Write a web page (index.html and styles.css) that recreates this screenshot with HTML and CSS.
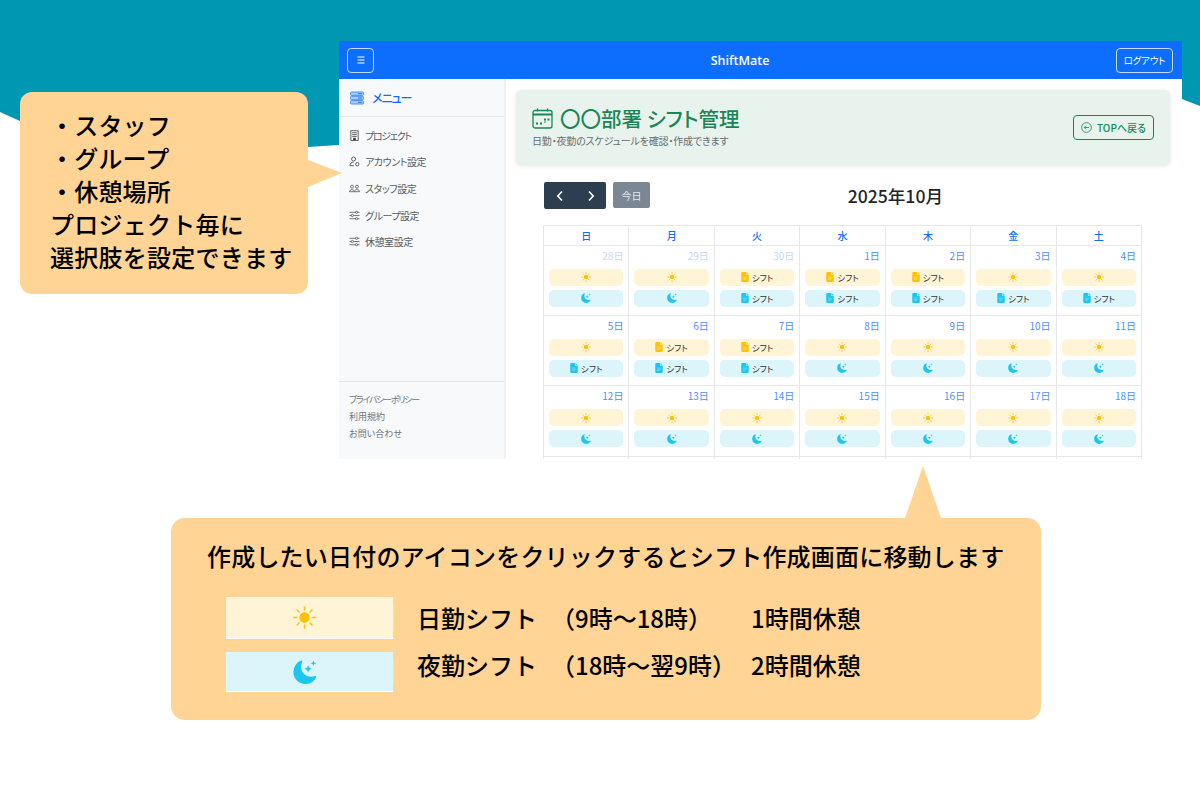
FILE: index.html
```html
<!DOCTYPE html>
<html lang="ja">
<head>
<meta charset="utf-8">
<title>ShiftMate</title>
<link rel="stylesheet" href="styles.css">
</head>
<body>
<svg class="defs" width="0" height="0" aria-hidden="true">
  <symbol id="sun" viewBox="0 0 16 16">
    <circle cx="8" cy="8" r="3.6" fill="#ffc107"/>
    <g stroke="#ffc107" stroke-width="1" stroke-linecap="round">
      <path d="M8 .6v2M8 13.4v2M.6 8h2M13.4 8h2M2.800 2.800l1.400 1.400M11.800 11.800l1.400 1.400M2.800 13.200l1.400-1.400M11.800 4.200l1.400-1.400"/>
    </g>
  </symbol>
  <symbol id="moon" viewBox="0 0 16 16">
    <path fill="#1cc6ef" d="M6 .6a.6.6 0 0 1 .1.7A6.6 6.6 0 0 0 5.300 4.500c0 3.700 3 6.700 6.700 6.700.9 0 1.800-.2 2.600-.5a.6.6 0 0 1 .8.800A7.700 7.700 0 0 1 8.200 16 7.900 7.900 0 0 1 .3 8.100 7.900 7.900 0 0 1 5.400.4.600.600 0 0 1 6 .6z"/>
    <path fill="#1cc6ef" d="M10.100 3.400l.7 1.800 1.800.7-1.800.7-.7 1.800-.7-1.800-1.800-.7 1.800-.7zM13.600.2l.5 1.400 1.400.5-1.400.5-.5 1.400-.5-1.400-1.400-.5 1.400-.5z"/>
  </symbol>
  <symbol id="doc" viewBox="0 0 12 16">
    <path d="M2 0h5.500v3a1.500 1.500 0 0 0 1.500 1.500h3V14a2 2 0 0 1-2 2H2a2 2 0 0 1-2-2V2a2 2 0 0 1 2-2z"/>
    <path d="M8.500 0 12 3.500H9a.5.500 0 0 1-.5-.5z"/>
    <path d="M3 8h6M3 10h6M3 12h4" stroke="#fff" stroke-opacity=".45" stroke-width="1"/>
  </symbol>
</svg>

<main class="slide">
  <svg class="wave" viewBox="0 0 1200 150" width="1200" height="150" aria-hidden="true">
    <path d="M0 0H1200V106L1182 99 760 132 339 145 308 147 120 146C80 140 50 134 20 121L0 112Z"/>
  </svg>

  <section class="app">
    <header class="topbar">
      <button class="tb-btn tb-menu" type="button" aria-label="menu">
        <svg width="10" height="10" viewBox="0 0 10 10"><path d="M1.500 2h7M1.500 5h7M1.500 8h7" stroke="#fff" stroke-width="1"/></svg>
      </button>
      <span class="brand">ShiftMate</span>
      <button class="tb-btn tb-logout" type="button">ログアウト</button>
    </header>
    <div class="app-body">
      <aside class="sidebar">
        <div class="side-head">
          <svg width="14" height="14" viewBox="0 0 14 14" aria-hidden="true">
            <rect x=".5" y="1" width="13" height="3.400" rx="1" fill="#a9cbff" stroke="#3d8bfd" stroke-width=".9"/>
            <rect x=".5" y="5.300" width="13" height="3.400" rx="1" fill="#a9cbff" stroke="#3d8bfd" stroke-width=".9"/>
            <rect x=".5" y="9.600" width="13" height="3.400" rx="1" fill="#a9cbff" stroke="#3d8bfd" stroke-width=".9"/>
            <path d="M8 2.700h4M8 7h4M8 11.300h4" stroke="#0d6efd" stroke-width=".9"/>
          </svg>
          <span class="side-title">メニュー</span>
        </div>
        <nav class="side-nav">
          <a class="side-link">
            <svg viewBox="0 0 12 12" width="11" height="11" aria-hidden="true"><path d="M2 .8h8v10.600H2zM3.500 3h5M3.500 5h5M3.500 7h5" fill="none" stroke="#444" stroke-width=".9"/><rect x="4.500" y="8.500" width="3" height="3" fill="#444"/></svg>
            <span class="tight">プロジェクト</span></a>
          <a class="side-link">
            <svg viewBox="0 0 12 12" width="11" height="11" aria-hidden="true"><circle cx="5" cy="3.300" r="2.200" fill="none" stroke="#444" stroke-width=".9"/><path d="M1 10.500c0-2.500 1.700-3.700 4-3.700" fill="none" stroke="#444" stroke-width=".9"/><path d="M1 10.600h4.500" stroke="#444" stroke-width=".9"/><circle cx="9" cy="9" r="1.800" fill="none" stroke="#444" stroke-width=".9"/></svg>
            <span>アカウント設定</span></a>
          <a class="side-link">
            <svg viewBox="0 0 12 12" width="11" height="11" aria-hidden="true"><g fill="none" stroke="#444" stroke-width=".8"><circle cx="3.300" cy="4" r="1.600"/><circle cx="8.700" cy="4" r="1.600"/><path d="M.5 9.500c0-3 5.500-3 5.500 0zM6 9.500h5.500c0-2.600-3.600-3-5-1.500"/></g></svg>
            <span>スタッフ設定</span></a>
          <a class="side-link">
            <svg viewBox="0 0 12 12" width="11" height="11" aria-hidden="true"><g fill="none" stroke="#444" stroke-width=".8"><path d="M.5 2.500h6.500M9.500 2.500h2M.5 6h2M5 6h6.500M.5 9.500h6.500M9.500 9.500h2"/><circle cx="8.200" cy="2.500" r="1.200"/><circle cx="3.700" cy="6" r="1.200"/><circle cx="8.200" cy="9.500" r="1.200"/></g></svg>
            <span>グループ設定</span></a>
          <a class="side-link">
            <svg viewBox="0 0 12 12" width="11" height="11" aria-hidden="true"><g fill="none" stroke="#444" stroke-width=".8"><path d="M.5 2.500h6.500M9.500 2.500h2M.5 6h2M5 6h6.500M.5 9.500h6.500M9.500 9.500h2"/><circle cx="8.200" cy="2.500" r="1.200"/><circle cx="3.700" cy="6" r="1.200"/><circle cx="8.200" cy="9.500" r="1.200"/></g></svg>
            <span>休憩室設定</span></a>
        </nav>
        <footer class="side-foot">
          <a class="tight">プライバシーポリシー</a>
          <a>利用規約</a>
          <a>お問い合わせ</a>
        </footer>
      </aside>

      <div class="content">
        <div class="hero">
          <div class="hero-text">
            <h1 class="hero-title">
              <svg width="21" height="21" viewBox="0 0 21 21" aria-hidden="true"><g fill="none" stroke="#198754" stroke-width="1.300"><rect x="1" y="2.500" width="19" height="17.500" rx="2"/><path d="M5.500.5v3M15.500.5v3"/></g><rect x="1" y="5.500" width="19" height="2" fill="#198754"/><path d="M12 10.500h2v2h-2zM15.500 10.500h2v2h-2zM4 14.500h2v2H4zM8 14.500h2v2H8zM12 13.500h2v1h-2z" fill="#198754"/></svg>
              <span>〇〇部署 シフト管理</span>
            </h1>
            <p class="hero-sub">日勤・夜勤のスケジュールを確認・作成できます</p>
          </div>
          <button class="back-btn" type="button">
            <svg width="11" height="11" viewBox="0 0 12 12" aria-hidden="true"><circle cx="6" cy="6" r="5.300" fill="none" stroke="#198754" stroke-width=".9"/><path d="M8.800 6H3.500M5.500 4 3.500 6l2 2" fill="none" stroke="#198754" stroke-width=".9"/></svg>
            TOPへ戻る
          </button>
        </div>

        <div class="cal">
          <div class="cal-bar">
            <div class="cal-tools">
              <div class="nav-group">
                <button type="button" aria-label="prev"><svg width="10" height="12" viewBox="0 0 10 12"><path d="M7 1.500 2.800 6 7 10.500" fill="none" stroke="#fff" stroke-width="1.600"/></svg></button>
                <button type="button" aria-label="next"><svg width="10" height="12" viewBox="0 0 10 12"><path d="M3 1.500 7.200 6 3 10.500" fill="none" stroke="#fff" stroke-width="1.600"/></svg></button>
              </div>
              <button class="today" type="button">今日</button>
            </div>
            <h2 class="cal-title">2025年10月</h2>
          </div>

          <div class="cal-grid">
            <div class="dow">日</div><div class="dow">月</div><div class="dow">火</div><div class="dow">水</div><div class="dow">木</div><div class="dow">金</div><div class="dow">土</div>

            <div class="day muted"><span class="num">28日</span><a class="pill day-p"><svg class="ic"><use href="#sun"/></svg></a><a class="pill night-p"><svg class="ic"><use href="#moon"/></svg></a></div>
            <div class="day muted"><span class="num">29日</span><a class="pill day-p"><svg class="ic"><use href="#sun"/></svg></a><a class="pill night-p"><svg class="ic"><use href="#moon"/></svg></a></div>
            <div class="day muted"><span class="num">30日</span><a class="pill day-p"><svg class="doc"><use href="#doc"/></svg>シフト</a><a class="pill night-p"><svg class="doc"><use href="#doc"/></svg>シフト</a></div>
            <div class="day"><span class="num">1日</span><a class="pill day-p"><svg class="doc"><use href="#doc"/></svg>シフト</a><a class="pill night-p"><svg class="doc"><use href="#doc"/></svg>シフト</a></div>
            <div class="day"><span class="num">2日</span><a class="pill day-p"><svg class="doc"><use href="#doc"/></svg>シフト</a><a class="pill night-p"><svg class="doc"><use href="#doc"/></svg>シフト</a></div>
            <div class="day"><span class="num">3日</span><a class="pill day-p"><svg class="ic"><use href="#sun"/></svg></a><a class="pill night-p"><svg class="doc"><use href="#doc"/></svg>シフト</a></div>
            <div class="day"><span class="num">4日</span><a class="pill day-p"><svg class="ic"><use href="#sun"/></svg></a><a class="pill night-p"><svg class="doc"><use href="#doc"/></svg>シフト</a></div>

            <div class="day"><span class="num">5日</span><a class="pill day-p"><svg class="ic"><use href="#sun"/></svg></a><a class="pill night-p"><svg class="doc"><use href="#doc"/></svg>シフト</a></div>
            <div class="day"><span class="num">6日</span><a class="pill day-p"><svg class="doc"><use href="#doc"/></svg>シフト</a><a class="pill night-p"><svg class="doc"><use href="#doc"/></svg>シフト</a></div>
            <div class="day"><span class="num">7日</span><a class="pill day-p"><svg class="doc"><use href="#doc"/></svg>シフト</a><a class="pill night-p"><svg class="doc"><use href="#doc"/></svg>シフト</a></div>
            <div class="day"><span class="num">8日</span><a class="pill day-p"><svg class="ic"><use href="#sun"/></svg></a><a class="pill night-p"><svg class="ic"><use href="#moon"/></svg></a></div>
            <div class="day"><span class="num">9日</span><a class="pill day-p"><svg class="ic"><use href="#sun"/></svg></a><a class="pill night-p"><svg class="ic"><use href="#moon"/></svg></a></div>
            <div class="day"><span class="num">10日</span><a class="pill day-p"><svg class="ic"><use href="#sun"/></svg></a><a class="pill night-p"><svg class="ic"><use href="#moon"/></svg></a></div>
            <div class="day"><span class="num">11日</span><a class="pill day-p"><svg class="ic"><use href="#sun"/></svg></a><a class="pill night-p"><svg class="ic"><use href="#moon"/></svg></a></div>

            <div class="day"><span class="num">12日</span><a class="pill day-p"><svg class="ic"><use href="#sun"/></svg></a><a class="pill night-p"><svg class="ic"><use href="#moon"/></svg></a></div>
            <div class="day"><span class="num">13日</span><a class="pill day-p"><svg class="ic"><use href="#sun"/></svg></a><a class="pill night-p"><svg class="ic"><use href="#moon"/></svg></a></div>
            <div class="day"><span class="num">14日</span><a class="pill day-p"><svg class="ic"><use href="#sun"/></svg></a><a class="pill night-p"><svg class="ic"><use href="#moon"/></svg></a></div>
            <div class="day"><span class="num">15日</span><a class="pill day-p"><svg class="ic"><use href="#sun"/></svg></a><a class="pill night-p"><svg class="ic"><use href="#moon"/></svg></a></div>
            <div class="day"><span class="num">16日</span><a class="pill day-p"><svg class="ic"><use href="#sun"/></svg></a><a class="pill night-p"><svg class="ic"><use href="#moon"/></svg></a></div>
            <div class="day"><span class="num">17日</span><a class="pill day-p"><svg class="ic"><use href="#sun"/></svg></a><a class="pill night-p"><svg class="ic"><use href="#moon"/></svg></a></div>
            <div class="day"><span class="num">18日</span><a class="pill day-p"><svg class="ic"><use href="#sun"/></svg></a><a class="pill night-p"><svg class="ic"><use href="#moon"/></svg></a></div>

            <div class="day"></div><div class="day"></div><div class="day"></div><div class="day"></div><div class="day"></div><div class="day"></div><div class="day"></div>
          </div>
        </div>
      </div>
    </div>
  </section>

  <aside class="note note-left">
    <p class="bullet">・スタッフ</p>
    <p class="bullet">・グループ</p>
    <p class="bullet">・休憩場所</p>
    <p>プロジェクト毎に</p>
    <p>選択肢を設定できます</p>
  </aside>

  <aside class="note note-bottom">
    <p class="note-lead">作成したい日付のアイコンをクリックするとシフト作成画面に移動します</p>
    <div class="legend">
      <div class="swatch swatch-day"><svg width="23" height="23" aria-hidden="true"><use href="#sun"/></svg></div>
      <span>日勤シフト</span><span>（9時〜18時）</span><span>1時間休憩</span>
      <div class="swatch swatch-night"><svg width="24" height="24" aria-hidden="true"><use href="#moon"/></svg></div>
      <span class="row2">夜勤シフト</span><span class="row2">（18時〜翌9時）</span><span class="row2">2時間休憩</span>
    </div>
  </aside>
</main>
</body>
</html>
```
FILE: styles.css
```css
* { box-sizing: border-box; }
html, body { margin: 0; padding: 0; }
body {
  background: #fff;
  font-family: "Noto Sans CJK JP", "Noto Sans", sans-serif;
  color: #212529;
  overflow: hidden;
}
p, h1, h2 { margin: 0; font-weight: inherit; }
button { font-family: inherit; padding: 0; }
.defs { position: absolute; }

.slide { position: relative; width: 1200px; height: 800px; overflow: hidden; }
.wave { position: absolute; left: 0; top: 0; display: block; }
.wave path { fill: #0097b2; }

/* app screenshot, a window on the free canvas */
.app {
  position: absolute; left: 339px; top: 41px;
  width: 843px; height: 418px;
  background: #fff;
  overflow: hidden;
  display: flex; flex-direction: column;
  font-feature-settings: "palt";
}
.topbar {
  flex: 0 0 38px;
  background: #0d6efd;
  display: flex; align-items: center; justify-content: space-between;
  padding: 0 9px 0 8px;
}
.tb-btn {
  height: 25px; background: transparent; color: #fff;
  border: 1px solid rgba(255,255,255,.75); border-radius: 4px;
  display: flex; align-items: center; justify-content: center;
}
.tb-menu { width: 27px; }
.tb-logout { width: 57px; font-size: 9.500px; letter-spacing: -.2px; font-feature-settings: "palt"; }
.brand { color: #fff; font-size: 12.500px; margin-right: 10px; font-family: "Open Sans", sans-serif; font-weight: 600; }

.app-body { flex: 1; display: flex; min-height: 0; }
.sidebar {
  flex: 0 0 167px;
  background: #f8f9fa;
  border-right: 2px solid #eff1f3;
  display: flex; flex-direction: column;
}
.side-head {
  height: 38px; flex: none;
  display: flex; align-items: center; gap: 8px;
  padding: 0 11px;
  border-bottom: 1px solid #e6e8ea;
  color: #0d6efd; font-size: 12px; font-weight: 500;
}
.side-title { letter-spacing: -1px; }
.side-nav { display: flex; flex-direction: column; padding-top: 5px; }
.side-link {
  height: 26.600px;
  display: flex; align-items: center; gap: 5px;
  padding-left: 10px;
  font-size: 10px; color: #555b61; white-space: nowrap; letter-spacing: -.45px;
}
.tight { letter-spacing: -1.300px; }
.side-foot {
  margin-top: auto;
  height: 78px;
  border-top: 1px solid #e2e4e6;
  padding: 9px 10px 0;
  display: flex; flex-direction: column;
  font-size: 9px; color: #6c757d; line-height: 17px;
}

.content { flex: 1; min-width: 0; padding: 11px 12px 0 10px; }
.hero {
  height: 75px;
  background: #e9f3ee;
  border-radius: 5px;
  box-shadow: 0 1px 4px rgba(0,0,0,.1);
  display: flex; align-items: center; justify-content: space-between;
  padding: 0 16px;
}
.hero-title {
  display: flex; align-items: center; gap: 7px;
  color: #198754; font-size: 20.500px; font-weight: 500; line-height: 26px;
  white-space: nowrap;
  margin-top: -2px;
}
.hero-sub { font-size: 10px; color: #666d73; line-height: 14px; margin-top: 3px; letter-spacing: -.17px; }
.back-btn {
  width: 81px; height: 25px;
  background: transparent; color: #198754;
  border: 1px solid #198754; border-radius: 4px;
  display: flex; align-items: center; justify-content: center; gap: 5px;
  font-size: 10px; font-weight: 500; font-feature-settings: "palt"; white-space: nowrap;
}

.cal { padding: 17px 28px 0; }
.cal-bar { position: relative; height: 43px; display: flex; justify-content: space-between; }
.cal-tools { display: flex; gap: 7px; align-items: flex-start; }
.nav-group { display: flex; width: 62px; height: 27px; background: #2c3e50; border-radius: 2px; }
.nav-group button { flex: 1; background: none; border: 0; display: flex; align-items: center; justify-content: center; }
.today { width: 37px; height: 26px; background: #7b8794; color: #e4e7ea; border: 0; border-radius: 2px; font-size: 10px; }
.cal-title { font-size: 17.600px; font-weight: 500; line-height: 28px; margin: 0 199px 0 0; white-space: nowrap; font-feature-settings: normal; }

.cal-grid {
  display: grid;
  grid-template-columns: repeat(7, 1fr);
  grid-auto-rows: 70.400px;
  grid-template-rows: 19.500px;
  width: 599px;
  margin-left: -1px;
  border-top: 1px solid #e6e8ea;
  border-left: 1px solid #e6e8ea;
}
.dow, .day { border-right: 1px solid #e6e8ea; border-bottom: 1px solid #e6e8ea; }
.dow { display: flex; align-items: center; justify-content: center; color: #0d6efd; font-size: 10px; font-weight: 500; }
.day { display: flex; flex-direction: column; padding: 3px 5px 0; }
.num { text-align: right; font-size: 10px; line-height: 14px; color: #4d8ffd; height: 20px; }
.muted .num { color: #c4d9fb; }
.pill {
  height: 17px; flex: none; border-radius: 5px; margin-bottom: 4px;
  display: flex; align-items: center; justify-content: center; gap: 3px;
  font-size: 8.500px; color: #333; font-feature-settings: "palt";
}
.day-p { background: #fff4d6; }
.night-p { background: #dcf5fb; }
.ic { width: 10px; height: 10px; }
.doc { width: 8px; height: 10px; }
.day-p .doc { fill: #ffc107; }
.night-p .doc { fill: #1cc6ef; }

/* callouts */
.note {
  position: absolute;
  background: #ffd495;
  color: #000;
  font-weight: 500;
  font-size: 24px;
}
.note::after { content: ""; position: absolute; background: #ffd495; }
.note-left {
  left: 20px; top: 92px; width: 288px; height: 202px;
  border-radius: 12px;
  padding: 16px 0 0 30px;
  line-height: 33px;
  white-space: nowrap;
  letter-spacing: .25px;
}
.note-left .bullet { letter-spacing: .2px; }
.note-left::after {
  left: 288px; top: 68px; width: 34px; height: 27px;
  clip-path: polygon(0 0, 100% 48%, 0 100%);
}
.note-bottom {
  left: 171px; top: 518px; width: 870px; height: 202px;
  border-radius: 14px;
  padding: 21px 37px 0 36px;
}
.note-bottom::after {
  left: 734px; top: -52px; width: 36px; height: 52px;
  clip-path: polygon(50% 0, 100% 100%, 0 100%);
}
.note-lead { font-size: 24px; line-height: 34px; white-space: nowrap; text-align: center; letter-spacing: .2px; }
.legend {
  margin: 24px 0 0 19px;
  display: grid;
  grid-template-columns: 176px 149px 200px auto;
  grid-template-rows: 42px 40px;
  row-gap: 13px;
  align-items: center;
  white-space: nowrap;
  line-height: 34px;
}
.legend > span:nth-child(4n+2) { padding-left: 15px; }
.row2 { margin-bottom: 14px; }
.swatch {
  width: 167px; height: 100%;
  display: flex; align-items: center; justify-content: center;
  padding-right: 10px;
  border-bottom: 1px solid #fff;
  box-shadow: 9px 0 0 -8px #ffdcaa;
}
.swatch-day { background: #fff4d6; }
.swatch-night { background: #dcf5fb; }
```
